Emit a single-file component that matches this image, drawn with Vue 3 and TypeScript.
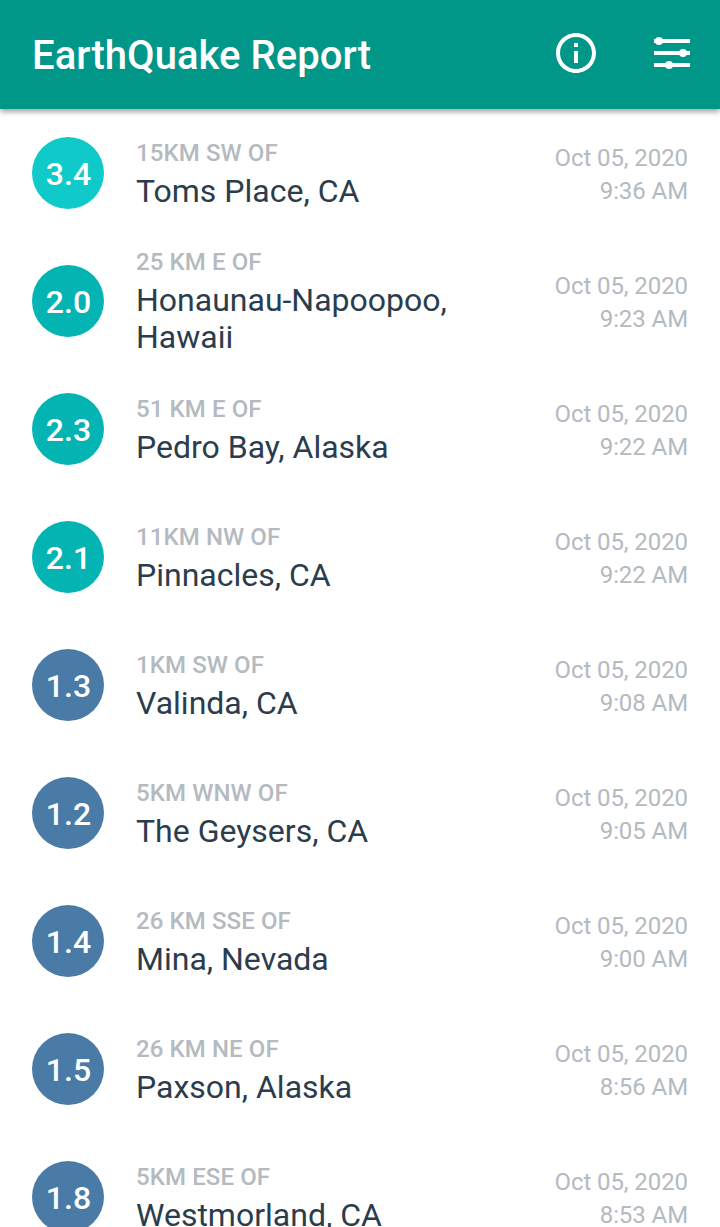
<script setup lang="ts">
interface Quake {
  magnitude: string
  level: 'low' | 'mid' | 'high'
  offset: string
  place: string
  date: string
  time: string
}

const date = 'Oct 05, 2020'
const quakes: Quake[] = [
  { magnitude: '3.4', level: 'high', offset: '15KM SW OF', place: 'Toms Place, CA', date, time: '9:36 AM' },
  { magnitude: '2.0', level: 'mid', offset: '25 KM E OF', place: 'Honaunau-Napoopoo, Hawaii', date, time: '9:23 AM' },
  { magnitude: '2.3', level: 'mid', offset: '51 KM E OF', place: 'Pedro Bay, Alaska', date, time: '9:22 AM' },
  { magnitude: '2.1', level: 'mid', offset: '11KM NW OF', place: 'Pinnacles, CA', date, time: '9:22 AM' },
  { magnitude: '1.3', level: 'low', offset: '1KM SW OF', place: 'Valinda, CA', date, time: '9:08 AM' },
  { magnitude: '1.2', level: 'low', offset: '5KM WNW OF', place: 'The Geysers, CA', date, time: '9:05 AM' },
  { magnitude: '1.4', level: 'low', offset: '26 KM SSE OF', place: 'Mina, Nevada', date, time: '9:00 AM' },
  { magnitude: '1.5', level: 'low', offset: '26 KM NE OF', place: 'Paxson, Alaska', date, time: '8:56 AM' },
  { magnitude: '1.8', level: 'low', offset: '5KM ESE OF', place: 'Westmorland, CA', date, time: '8:53 AM' },
]
</script>

<template>
  <div class="screen">
    <header class="bar">
      <h1 class="title">EarthQuake Report</h1>
      <button class="action" aria-label="Information">
        <svg width="48" height="48" viewBox="0 0 24 24" fill="#fff">
          <path d="M11 7h2v2h-2zm0 4h2v6h-2zm1-9C6.480 2 2 6.480 2 12s4.480 10 10 10 10-4.480 10-10S17.520 2 12 2zm0 18c-4.410 0-8-3.590-8-8s3.590-8 8-8 8 3.590 8 8-3.590 8-8 8z" />
        </svg>
      </button>
      <button class="action" aria-label="Settings">
        <svg width="48" height="48" viewBox="0 0 48 48" fill="#fff">
          <path d="M6 10h36v4H6zM6 22h36v4H6zM6 34h36v4H6z" />
          <circle cx="11" cy="12" r="4" />
          <circle cx="35" cy="24" r="4" />
          <circle cx="21" cy="36" r="4" />
        </svg>
      </button>
    </header>
    <main class="list">
      <article v-for="quake in quakes" :key="quake.place" class="row">
        <span class="magnitude" :class="quake.level">{{ quake.magnitude }}</span>
        <div class="location">
          <span class="offset">{{ quake.offset }}</span>
          <span class="place">{{ quake.place }}</span>
        </div>
        <div class="when">
          <span>{{ quake.date }}</span>
          <span>{{ quake.time }}</span>
        </div>
      </article>
    </main>
  </div>
</template>

<style>
body {
  margin: 0;
  background: #fff;
}
</style>

<style scoped>
.screen {
  height: 1227px;
  overflow: hidden;
  display: flex;
  flex-direction: column;
  background: #fff;
  font-family: Roboto, sans-serif;
}
.bar {
  position: relative;
  flex: none;
  box-sizing: border-box;
  height: 109px;
  padding: 0 24px 3px 32px;
  display: flex;
  align-items: center;
  gap: 48px;
  background: #009688;
  box-shadow: 0 3px 5px rgba(0, 0, 0, 0.35);
}
.title {
  flex: 1;
  margin: 6px 0 0;
  color: #fff;
  font-size: 40px;
  line-height: 48px;
  font-weight: 500;
  letter-spacing: 0.05px;
}
.action {
  display: flex;
  padding: 0;
  border: 0;
  background: none;
}
.list {
  flex: none;
}
.row {
  box-sizing: border-box;
  height: 128px;
  padding: 0 32px;
  display: flex;
  align-items: center;
}
.magnitude {
  flex: none;
  width: 72px;
  height: 72px;
  border-radius: 50%;
  color: #fff;
  font-size: 32px;
  line-height: 74px;
  font-weight: 500;
  text-align: center;
  text-indent: 1px;
}
.high {
  background: #10cac9;
}
.mid {
  background: #04b4b3;
}
.low {
  background: #4a7ba7;
}
.location {
  width: 350px;
  margin-left: 32px;
  display: flex;
  flex-direction: column;
}
.offset {
  color: #b4bac0;
  font-size: 24px;
  line-height: 33px;
  font-weight: 500;
  letter-spacing: 0.1px;
}
.place {
  padding-top: 3px;
  color: #2b3d4d;
  font-size: 32px;
  line-height: 37px;
}
.when {
  margin-left: auto;
  padding-top: 4px;
  display: flex;
  flex-direction: column;
  text-align: right;
  color: #b4bac0;
  font-size: 24px;
  line-height: 33px;
  letter-spacing: -0.08px;
}
</style>
